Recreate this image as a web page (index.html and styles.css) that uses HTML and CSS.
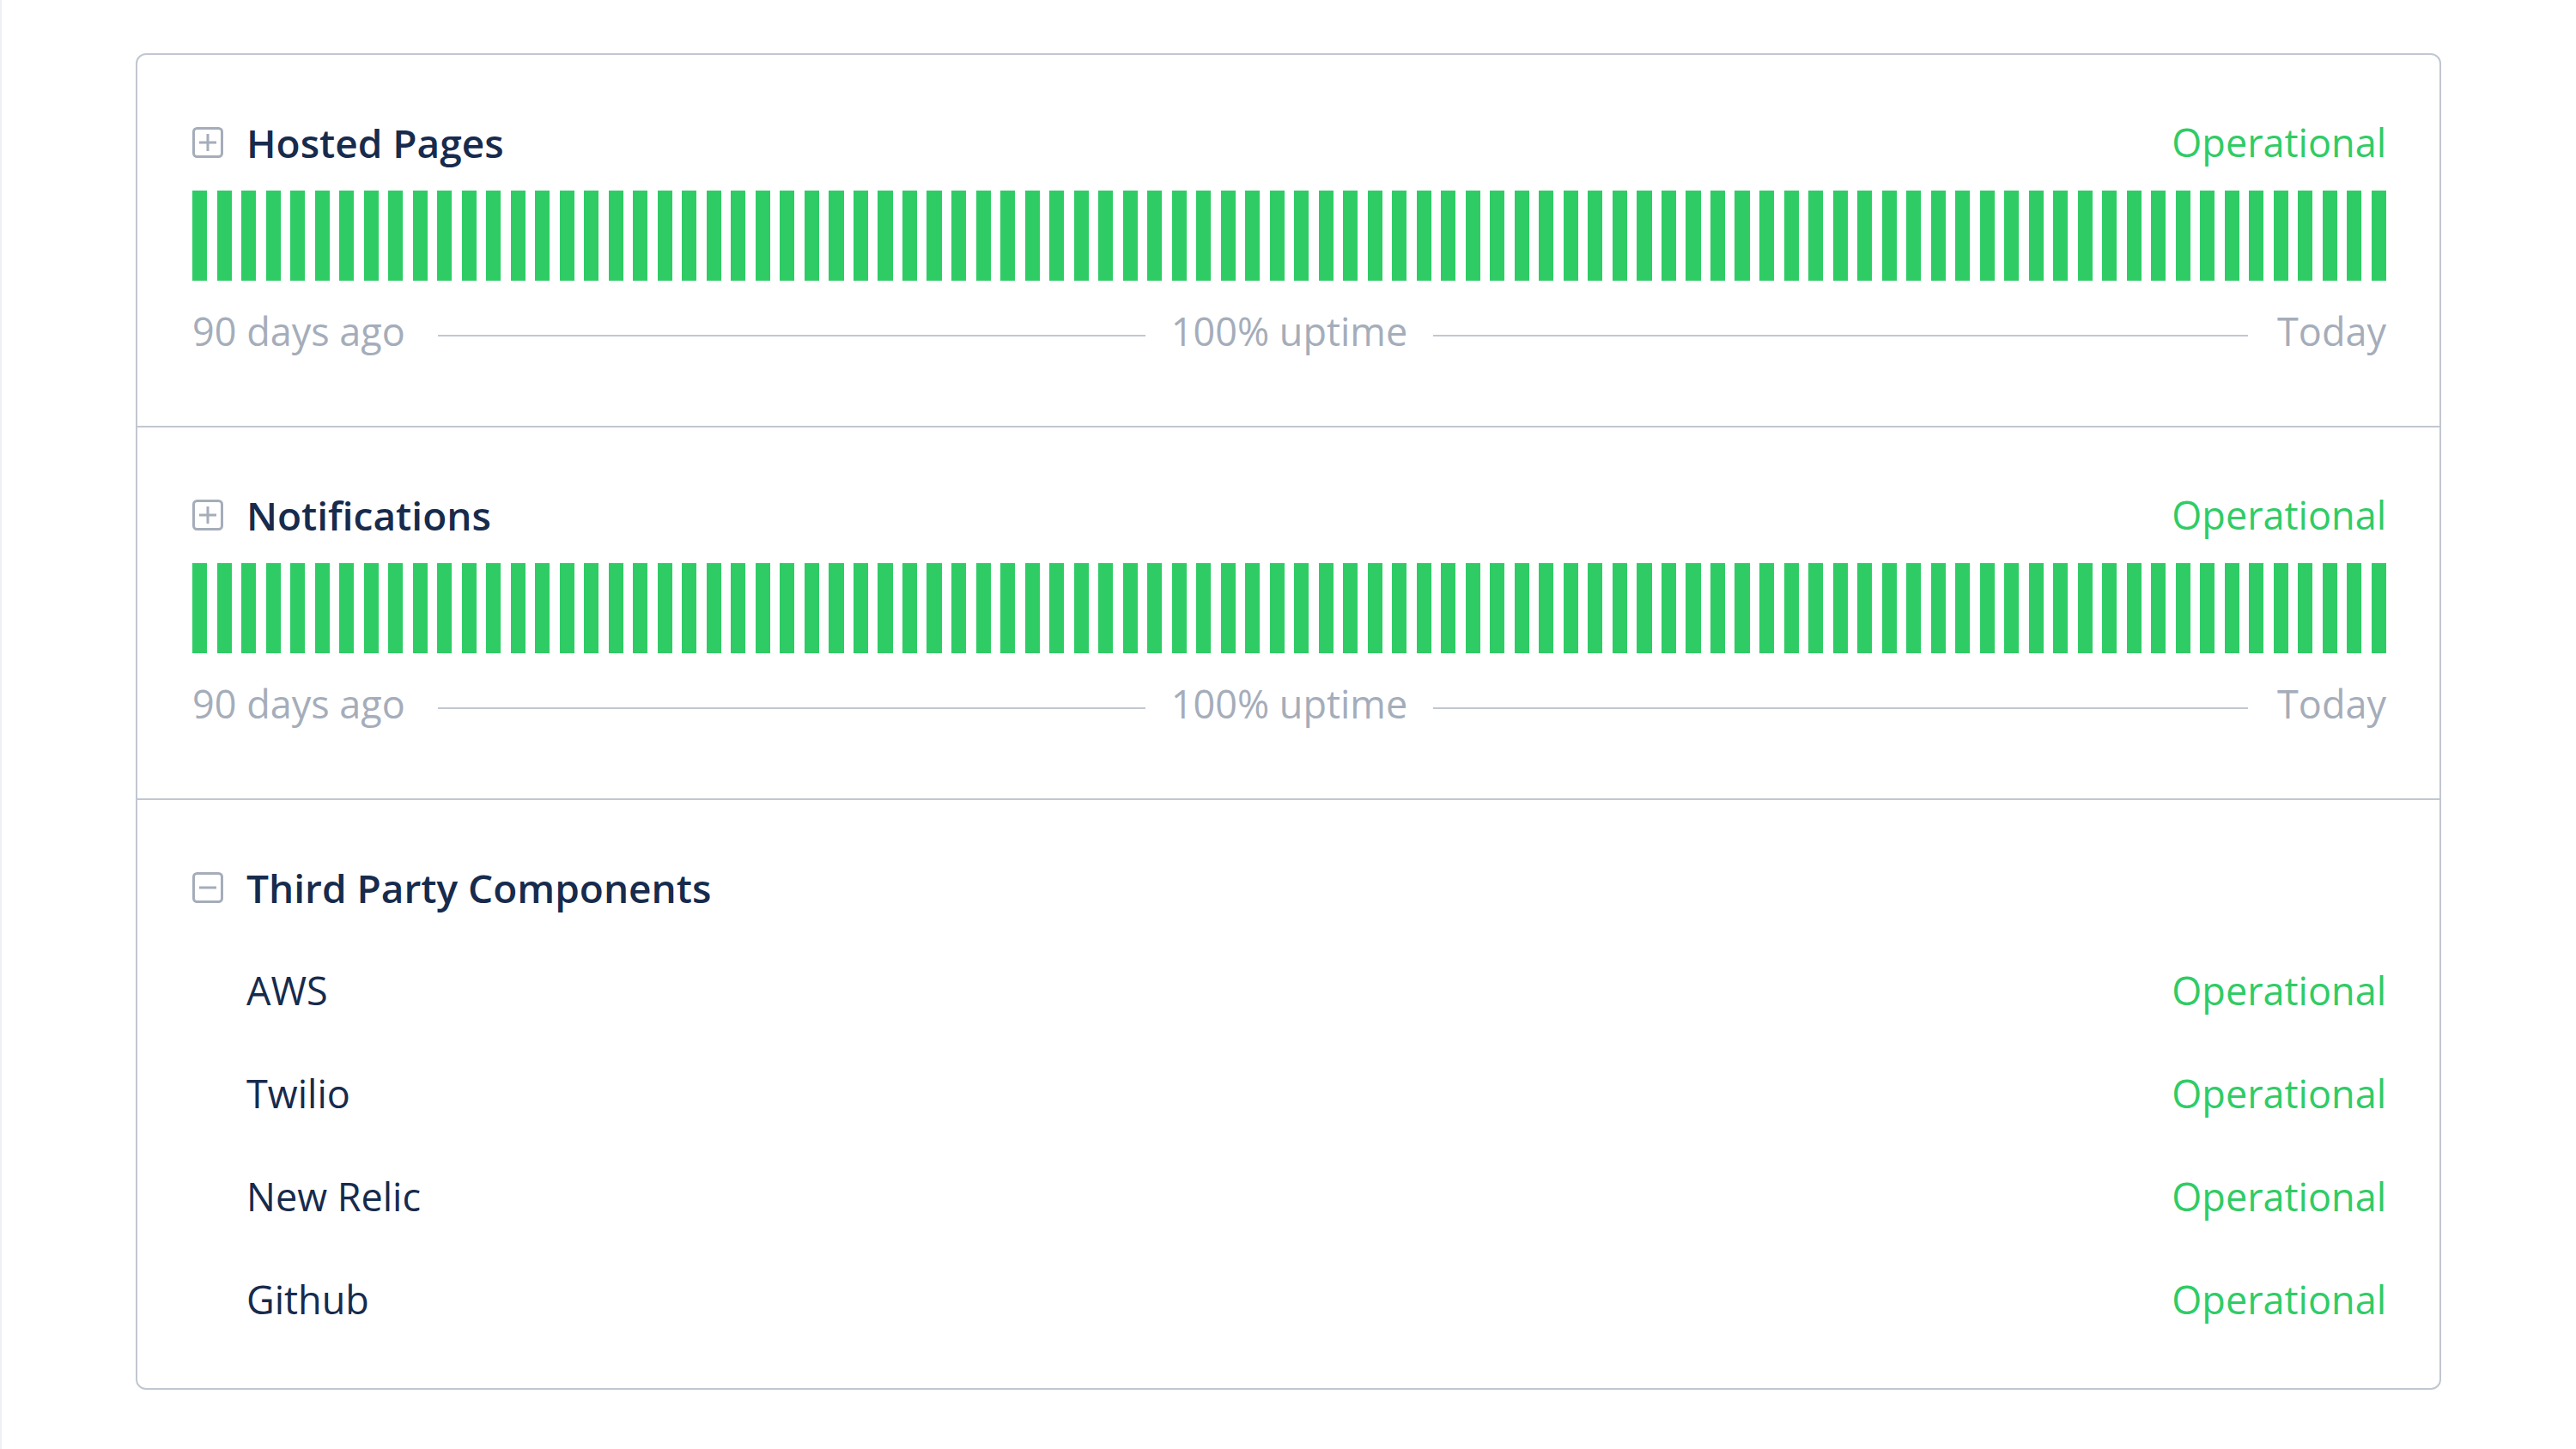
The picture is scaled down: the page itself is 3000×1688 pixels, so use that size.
FILE: index.html
```html
<!DOCTYPE html>
<html lang="en">
<head>
    <meta charset="UTF-8">
    <meta name="viewport" content="width=device-width, initial-scale=1.0">
    <title>System status</title>
    <link rel="stylesheet" href="styles.css">
</head>
<body>
    <div class="page">
        <div class="components">

            <!-- Hosted Pages -->
            <div class="group">
                <div class="group-head">
                    <svg class="toggle" viewBox="0 0 36 36" aria-hidden="true">
                        <rect x="1.5" y="1.5" width="33" height="33" rx="4" />
                        <path d="M8 18h20M18 8v20" />
                    </svg>
                    <span class="group-name">Hosted Pages</span>
                    <span class="status">Operational</span>
                </div>
                <div class="uptime-bars">
                    <span></span><span></span><span></span><span></span><span></span><span></span><span></span><span></span><span></span><span></span>
                    <span></span><span></span><span></span><span></span><span></span><span></span><span></span><span></span><span></span><span></span>
                    <span></span><span></span><span></span><span></span><span></span><span></span><span></span><span></span><span></span><span></span>
                    <span></span><span></span><span></span><span></span><span></span><span></span><span></span><span></span><span></span><span></span>
                    <span></span><span></span><span></span><span></span><span></span><span></span><span></span><span></span><span></span><span></span>
                    <span></span><span></span><span></span><span></span><span></span><span></span><span></span><span></span><span></span><span></span>
                    <span></span><span></span><span></span><span></span><span></span><span></span><span></span><span></span><span></span><span></span>
                    <span></span><span></span><span></span><span></span><span></span><span></span><span></span><span></span><span></span><span></span>
                    <span></span><span></span><span></span><span></span><span></span><span></span><span></span><span></span><span></span><span></span>
                </div>
                <div class="legend">
                    <div class="legend-side">
                        <span>90 days ago</span>
                        <i class="spacer"></i>
                    </div>
                    <span class="legend-mid">100% uptime</span>
                    <div class="legend-side">
                        <i class="spacer"></i>
                        <span>Today</span>
                    </div>
                </div>
            </div>

            <!-- Notifications -->
            <div class="group">
                <div class="group-head">
                    <svg class="toggle" viewBox="0 0 36 36" aria-hidden="true">
                        <rect x="1.5" y="1.5" width="33" height="33" rx="4" />
                        <path d="M8 18h20M18 8v20" />
                    </svg>
                    <span class="group-name">Notifications</span>
                    <span class="status">Operational</span>
                </div>
                <div class="uptime-bars">
                    <span></span><span></span><span></span><span></span><span></span><span></span><span></span><span></span><span></span><span></span>
                    <span></span><span></span><span></span><span></span><span></span><span></span><span></span><span></span><span></span><span></span>
                    <span></span><span></span><span></span><span></span><span></span><span></span><span></span><span></span><span></span><span></span>
                    <span></span><span></span><span></span><span></span><span></span><span></span><span></span><span></span><span></span><span></span>
                    <span></span><span></span><span></span><span></span><span></span><span></span><span></span><span></span><span></span><span></span>
                    <span></span><span></span><span></span><span></span><span></span><span></span><span></span><span></span><span></span><span></span>
                    <span></span><span></span><span></span><span></span><span></span><span></span><span></span><span></span><span></span><span></span>
                    <span></span><span></span><span></span><span></span><span></span><span></span><span></span><span></span><span></span><span></span>
                    <span></span><span></span><span></span><span></span><span></span><span></span><span></span><span></span><span></span><span></span>
                </div>
                <div class="legend">
                    <div class="legend-side">
                        <span>90 days ago</span>
                        <i class="spacer"></i>
                    </div>
                    <span class="legend-mid">100% uptime</span>
                    <div class="legend-side">
                        <i class="spacer"></i>
                        <span>Today</span>
                    </div>
                </div>
            </div>

            <!-- Third Party Components (expanded) -->
            <div class="group group-open">
                <div class="group-head">
                    <svg class="toggle" viewBox="0 0 36 36" aria-hidden="true">
                        <rect x="1.5" y="1.5" width="33" height="33" rx="4" />
                        <path d="M8 18h20" />
                    </svg>
                    <span class="group-name">Third Party Components</span>
                </div>
                <div class="children">
                    <div class="child">
                        <span class="child-name">AWS</span>
                        <span class="status">Operational</span>
                    </div>
                    <div class="child">
                        <span class="child-name">Twilio</span>
                        <span class="status">Operational</span>
                    </div>
                    <div class="child">
                        <span class="child-name">New Relic</span>
                        <span class="status">Operational</span>
                    </div>
                    <div class="child">
                        <span class="child-name">Github</span>
                        <span class="status">Operational</span>
                    </div>
                </div>
            </div>

        </div>
    </div>
</body>
</html>
```

FILE: styles.css
```css
/* page */
body {
    margin: 0;
    min-height: 100vh;
    box-sizing: border-box;
    background: #fff;
    border-left: 2px solid #eef0f4;
    font-family: "Open Sans", "Liberation Sans", sans-serif;
    color: #172b4d;
}

.page {
    padding: 62px 157px 0 156px;
}

/* card with all components */
.components {
    border: 2px solid #c1c7d0;
    border-radius: 12px;
}

.group {
    padding: 79px 62px 87px 64px;
    border-top: 2px solid #c1c7d0;
}

.group:first-child {
    border-top: none;
}

.group-open {
    padding-bottom: 43px;
}

/* header row: toggle, name, status */
.group-head {
    display: flex;
    align-items: center;
    height: 46px;
}

.toggle {
    width: 36px;
    height: 36px;
    margin-right: 27px;
    flex-shrink: 0;
}

.toggle rect,
.toggle path {
    fill: none;
    stroke: #a5adba;
    stroke-width: 3;
}

.group-name {
    font-size: 46px;
    line-height: 46px;
    font-weight: 600;
    color: #172b4d;
}

.status {
    margin-left: auto;
    font-size: 45px;
    line-height: 46px;
    color: #2fcc66;
}

/* 90 day uptime bars */
.uptime-bars {
    display: flex;
    justify-content: space-between;
    height: 105px;
    margin-top: 33px;
}

.uptime-bars span {
    width: 0.6696%;
    background-color: #2fcc66;
}

/* legend under the bars */
.legend {
    display: grid;
    grid-template-columns: 1fr auto 1fr;
    align-items: center;
    margin-top: 36px;
    font-size: 45px;
    line-height: 46px;
    color: #a5adba;
}

.legend-side {
    display: flex;
    align-items: center;
}

.spacer {
    flex: 1;
    height: 2px;
    margin-top: 10px;
    background-color: #c1c7d0;
}

.legend-side .spacer:last-child {
    margin-left: 38px;
    margin-right: 30px;
}

.legend-side .spacer:first-child {
    margin-left: 30px;
    margin-right: 34px;
}

/* child components */
.children {
    margin-top: 37px;
}

.child {
    display: flex;
    align-items: center;
    padding: 37px 0 37px 63px;
}

.child-name {
    font-size: 45px;
    line-height: 46px;
    color: #172b4d;
}
```
